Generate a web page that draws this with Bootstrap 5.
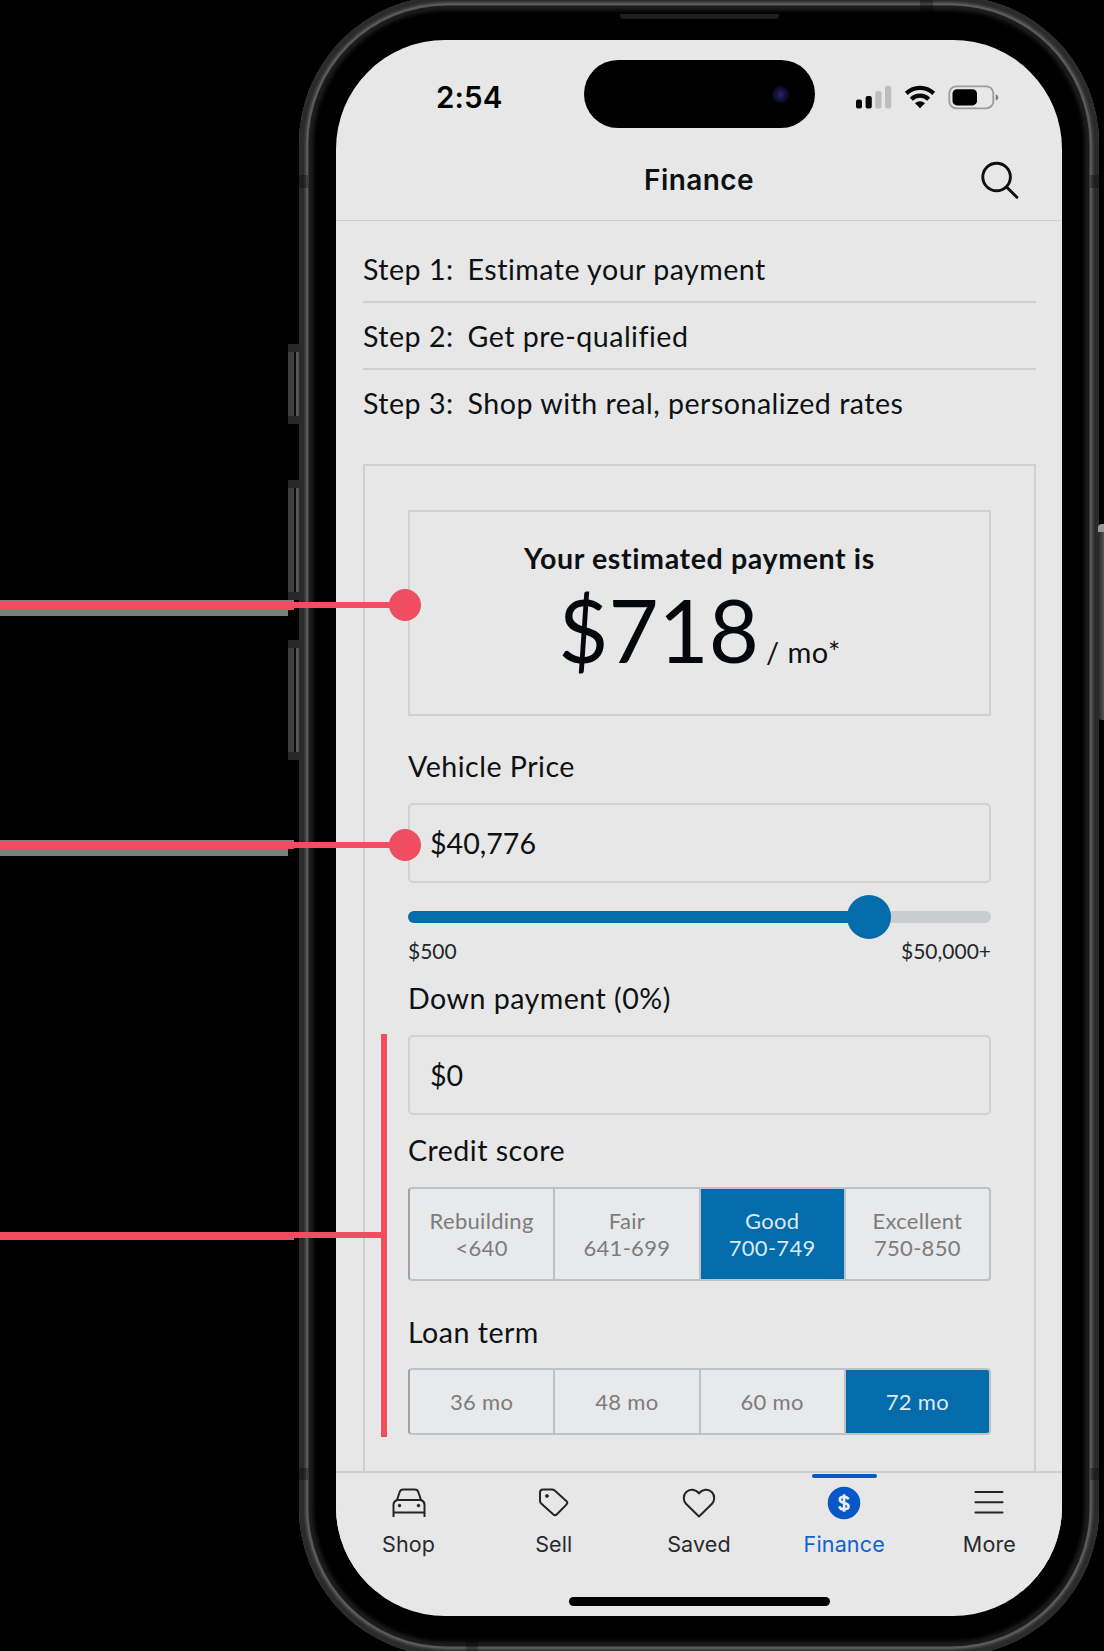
<!DOCTYPE html>
<html lang="en">
<head>
<meta charset="utf-8">
<meta name="viewport" content="width=device-width, initial-scale=1">
<title>Finance</title>
<link href="https://cdn.jsdelivr.net/npm/bootstrap@5.3.0/dist/css/bootstrap.min.css" rel="stylesheet">
<style>
  body { background:#000; color:#0d1114; font-family:Lato,"Liberation Sans",sans-serif; font-size:28.6px; line-height:36px; letter-spacing:.48px; font-variant-ligatures:none; width:1104px; height:1651px; overflow:hidden; }
  .stage { width:1104px; height:1651px; overflow:hidden; padding-left:299px; }
  .device { width:800px; height:1660px; margin-top:-4px; padding:44px 37px 0 37px; border-radius:148px;
    background:#000; box-shadow:inset 0 0 1px 5px #2b2b2b, inset 0 0 1px 7px #3c3c3c, inset 0 0 1px 9.5px #5e5e5e, inset 0 0 1px 11px #181818, inset 0 0 4px 14px #222; }
  .screen { width:726px; height:1575.5px; border-radius:109px; background:#e7e7e7; overflow:hidden; }
  .ui-font { font-family:Inter,"Liberation Sans",sans-serif; }
  .statusbar { height:108px; padding:20px 63px 0 100px; }
  .clock { font-size:29.5px; font-weight:600; width:148px; letter-spacing:.1px; padding-top:3px; color:#050505; }
  .island { width:231px; height:68px; border-radius:34px; background:#000; padding-right:26px; }
  .lens { width:17px; height:17px; border-radius:50%; background:radial-gradient(circle,#2a2a6a 0,#12123f 40%,#0a0a22 65%,#000 100%); }
  .titlebar { height:73px; border-bottom:1.5px solid #cdcdcd; padding:0 43px 9px; }
  .titlebar h1 { font-size:28px; font-weight:600; letter-spacing:.4px; line-height:36px; }
  .steps { padding:15px 26px 0 27px; }
  .step { height:67px; border-bottom:2px solid #cfcfcf; gap:14px; }
  .step:last-child { border-bottom-color:transparent; }
  .calc { margin:27px 26px 0 27px; height:1007px; border:2px solid #d0d0d0; border-bottom:0; padding:44px 43px 0; }
  .estimate { height:206px; border:2px solid #d0d0d0; padding-top:28px; }
  .est-title { letter-spacing:.6px; }
  .amount { font-size:86.5px; line-height:86px; margin-top:11px; color:#04070b; letter-spacing:0; }
  .per-month { font-size:29px; letter-spacing:.5px; margin-left:7px; color:#0d1114; }
  .field-box { border:2px solid #d0d0d0; border-radius:5px; height:80px; padding:0 20px; letter-spacing:0; margin-top:19px; }
  .track { height:12px; border-radius:6px; background:#c9cdd3; margin-top:28px; }
  .track .fill { height:12px; border-radius:6px; background:#046cab; }
  .thumb { width:44px; height:44px; border-radius:50%; background:#046cab; margin-right:-22px; flex:none; }
  .limits { font-size:21px; line-height:26px; margin-top:15px; color:#24272a; letter-spacing:0; }
  .segments { border:2px solid #bcc3c6; border-left-color:#9ba1a4; border-radius:4px; background:#e8e9ea; overflow:hidden; }
  .segments .seg { flex:1 1 0; font-size:22px; line-height:27px; letter-spacing:.3px; color:#7c7c7c; border-right:2px solid #bcc3c6; text-align:center; }
  .segments .seg:last-child { border-right:0; }
  .segments .seg.chosen { background:#046cab; color:#dce9f1; border-right-color:#bcc3c6; }
  .tabs { border-top:2px solid #cdcdcd; background:#e7e7e7; height:120px; }
  .tab { flex:1 1 0; font-size:21.5px; line-height:28px; color:#272a2d; letter-spacing:.15px; }
  .tab .tick { width:65px; height:4px; border-radius:2px; margin-top:1px; }
  .tab.current { color:#0f63cf; }
  .tab.current .tick { background:#0757c6; }
  .tab svg { margin-top:8px; margin-bottom:10px; }
  .home-bar { width:261px; height:9px; border-radius:5px; background:#000; margin:6px auto 0; }
  .hw, .mark-line { position:absolute; }
  .hw { width:12px; left:288px; background:linear-gradient(90deg,#3f3f3f 0 6px,#0c0c0c 6px 7.5px,#5a5a5a 8px 10px,#222 12px); border-top:8px solid #292929; border-bottom:8px solid #292929; }
  .hw-right { left:1098px; width:6px; background:linear-gradient(90deg,#222,#555); border:0; border-top:8px solid #999; border-radius:4px 0 0 4px; }
  .mark-line { background:#ee4e5f; left:0; }
  .mark-band { background:#7e807c; left:0; }
  .mark-dot { position:absolute; width:32px; height:32px; border-radius:50%; background:#ee4e5f; left:389px; }
  .speaker { position:absolute; left:620px; top:14px; width:159px; height:5px; background:#1e1e1e; border-radius:0 0 4px 4px; }
  .band { position:absolute; background:rgba(0,0,0,.3); }
</style>
</head>
<body>
<div class="stage position-relative">
  <div class="hw" style="top:344px;height:80px"></div>
  <div class="hw" style="top:480px;height:120px"></div>
  <div class="hw" style="top:640px;height:120px"></div>

  <div class="device">
    <div class="screen d-flex flex-column">
      <div class="statusbar d-flex align-items-start ui-font">
        <div class="clock align-self-start mt-3">2:54</div>
        <div class="island d-flex align-items-center justify-content-end"><div class="lens"></div></div>
        <svg class="ms-auto" width="143" height="26" viewBox="0 0 143 26" style="margin-top:24px">
          <g fill="#050505"><rect x="0" y="15.5" width="6" height="9" rx="2"/><rect x="9.6" y="12" width="6.2" height="12.5" rx="2"/></g>
          <g fill="#bdbdbd"><rect x="19.3" y="7" width="6.2" height="17.5" rx="2"/><rect x="29" y="2" width="6.2" height="22.5" rx="2"/></g>
          <g fill="none" stroke="#050505" stroke-width="4.2"><path d="M50.3 9.4a20 20 0 0 1 27.4 0"/><path d="M55.3 15.2a12.4 12.4 0 0 1 17.4 0"/></g>
          <path fill="#050505" d="M64 24.3l-5-5a7.2 7.2 0 0 1 10 0z"/>
          <rect x="93.3" y="2.3" width="44" height="22" rx="7" fill="none" stroke="#9b9b9b" stroke-width="1.8"/>
          <rect x="96.5" y="5.2" width="24.5" height="16.2" rx="4.5" fill="#000"/>
          <path d="M139.8 10.2q2.4 1 2.4 3.2t-2.4 3.2z" fill="#777"/>
        </svg>
      </div>
      <div class="titlebar d-flex align-items-center ui-font">
        <div style="width:38px"></div>
        <h1 class="flex-fill text-center m-0">Finance</h1>
        <svg width="38" height="38" viewBox="0 0 38 38" fill="none" stroke="#0d0f12" stroke-width="2.9" stroke-linecap="round"><circle cx="15.600" cy="16" r="13.800"/><path d="M25.600 26l10.300 10.300"/></svg>
      </div>

      <div class="steps">
        <div class="step d-flex align-items-center"><span>Step 1:</span><span>Estimate your payment</span></div>
        <div class="step d-flex align-items-center"><span>Step 2:</span><span>Get pre-qualified</span></div>
        <div class="step d-flex align-items-center"><span>Step 3:</span><span>Shop with real, personalized rates</span></div>
      </div>

      <div class="calc flex-shrink-0">
        <div class="estimate text-center">
          <div class="fw-bold est-title">Your estimated payment is</div>
          <div class="d-flex justify-content-center align-items-baseline amount"><span>$718</span><span class="per-month">/ mo*</span></div>
        </div>
        <div style="margin-top:32px">Vehicle Price</div>
        <div class="field-box d-flex align-items-center">$40,776</div>
        <div class="track"><div class="fill d-flex align-items-center justify-content-end" style="width:79%"><div class="thumb"></div></div></div>
        <div class="limits d-flex justify-content-between"><span>$500</span><span>$50,000+</span></div>
        <div style="margin-top:16px">Down payment (0%)</div>
        <div class="field-box d-flex align-items-center">$0</div>
        <div style="margin-top:17px">Credit score</div>
        <div class="segments d-flex" style="height:94px;margin-top:19px">
          <div class="seg d-flex flex-column justify-content-center"><span>Rebuilding</span><span>&lt;640</span></div>
          <div class="seg d-flex flex-column justify-content-center"><span>Fair</span><span>641-699</span></div>
          <div class="seg chosen d-flex flex-column justify-content-center"><span>Good</span><span>700-749</span></div>
          <div class="seg d-flex flex-column justify-content-center"><span>Excellent</span><span>750-850</span></div>
        </div>
        <div style="margin-top:33px">Loan term</div>
        <div class="segments d-flex" style="height:67px;margin-top:18px">
          <div class="seg d-flex align-items-center justify-content-center">36 mo</div>
          <div class="seg d-flex align-items-center justify-content-center">48 mo</div>
          <div class="seg d-flex align-items-center justify-content-center">60 mo</div>
          <div class="seg chosen d-flex align-items-center justify-content-center">72 mo</div>
        </div>
      </div>

      <nav class="tabs d-flex flex-shrink-0 ui-font">
        <div class="tab d-flex flex-column align-items-center"><span class="tick"></span>
          <svg width="34" height="34" viewBox="0 0 34 34" fill="none" stroke="#222528" stroke-width="2"><path d="M5 14L7.700 6q.8-2.500 3.400-2.500h11.800q2.600 0 3.400 2.500L29 14M5 14h24M1.500 31V18.500q0-3 3.500-4.500M32.500 31V18.500q0-3-3.500-4.500M1.500 26.500h31"/><circle cx="7.500" cy="19.600" r="1.300" fill="#222528" stroke-width="1"/><circle cx="26.500" cy="19.600" r="1.300" fill="#222528" stroke-width="1"/></svg>
          Shop</div>
        <div class="tab d-flex flex-column align-items-center"><span class="tick"></span>
          <svg width="34" height="34" viewBox="0 0 34 34" fill="none" stroke="#222528" stroke-width="2" stroke-linejoin="round"><path d="M3 6.500q0-3 3-3h9q1.500 0 2.700 1.100l11.600 10.400q2 1.800.1 3.600l-9.500 9.600q-1.900 1.900-3.800 0L4.200 17.500Q3 16.300 3 14.700z"/><circle cx="10" cy="10" r="1.400" fill="#222528" stroke-width="1"/></svg>
          Sell</div>
        <div class="tab d-flex flex-column align-items-center"><span class="tick"></span>
          <svg width="34" height="34" viewBox="0 0 34 34" fill="none" stroke="#222528" stroke-width="2" stroke-linejoin="round"><path d="M17 30.500L4 17.700C1.300 15 .9 9.500 4 6.200 7.700 2.600 13.400 3 17 7.400 20.600 3 26.300 2.600 30 6.200c3.100 3.300 2.700 8.800 0 11.500z"/></svg>
          Saved</div>
        <div class="tab current d-flex flex-column align-items-center"><span class="tick"></span>
          <svg width="34" height="34" viewBox="0 0 34 34"><circle cx="17" cy="17" r="16.300" fill="#0757c6"/><path d="M21.300 13.400c-.5-2-2.300-2.600-4.300-2.600-2.400 0-4.200 1.100-4.200 2.900 0 4.500 8.800 2.100 8.800 6.600 0 1.900-2 3-4.400 3-2.500 0-4.500-1-4.800-3.100M17.100 8.300v17.400" fill="none" stroke="#e7eef7" stroke-width="2.600"/></svg>
          Finance</div>
        <div class="tab d-flex flex-column align-items-center"><span class="tick"></span>
          <svg width="34" height="34" viewBox="0 0 34 34" stroke="#222528" stroke-width="2.100" stroke-linecap="round"><path d="M3.500 6h27M3.500 16.200h27M3.500 26.500h27"/></svg>
          More</div>
      </nav>
      <div class="home-bar flex-shrink-0"></div>
    </div>
  </div>

  <div class="speaker"></div>
  <div class="band" style="left:299px;top:175px;width:9px;height:13px"></div>
  <div class="band" style="left:1090px;top:175px;width:9px;height:13px"></div>
  <div class="band" style="left:920px;top:0;width:13px;height:13px"></div>
  <div class="band" style="left:299px;top:1468px;width:9px;height:12px"></div>
  <div class="band" style="left:1090px;top:1468px;width:9px;height:12px"></div>
  <div class="band" style="left:466px;top:1641px;width:12px;height:10px"></div>
  <div class="hw hw-right" style="top:524px;height:196px"></div>

  <!-- callout pointers -->
  <div class="mark-line mark-band" style="top:600px;width:294px;height:2px"></div>
  <div class="mark-line mark-band" style="top:609px;width:288px;height:7px"></div>
  <div class="mark-line" style="top:602px;width:294px;height:8px"></div>
  <div class="mark-line" style="top:602px;width:400px;height:6px"></div>
  <div class="mark-dot" style="top:589px"></div>
  <div class="mark-line mark-band" style="top:840px;width:294px;height:2px"></div>
  <div class="mark-line mark-band" style="top:849px;width:288px;height:7px"></div>
  <div class="mark-line" style="top:842px;width:294px;height:7px"></div>
  <div class="mark-line" style="top:842px;width:400px;height:6px"></div>
  <div class="mark-dot" style="top:829px"></div>
  <div class="mark-line" style="top:1232px;width:294px;height:8px"></div>
  <div class="mark-line" style="top:1232px;width:382px;height:6px"></div>
  <div class="mark-line" style="left:381px;top:1034px;width:6px;height:403px"></div>
</div>
<script src="https://cdn.jsdelivr.net/npm/bootstrap@5.3.0/dist/js/bootstrap.bundle.min.js"></script>
</body>
</html>
